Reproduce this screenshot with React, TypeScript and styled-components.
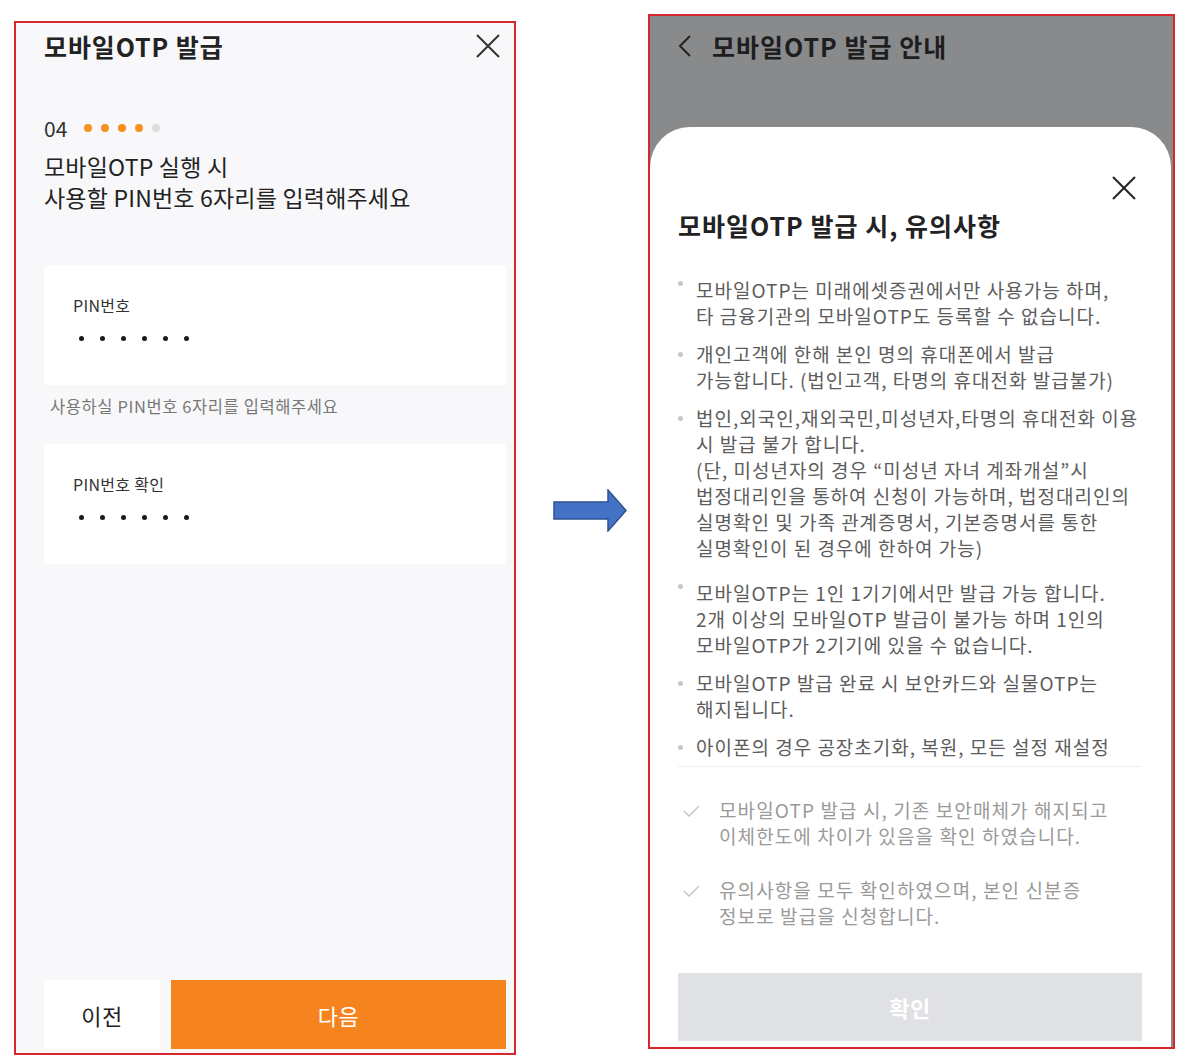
import React from "react";
import styled, { createGlobalStyle } from "styled-components";

const Global = createGlobalStyle`
  html, body { margin: 0; padding: 0; background: #ffffff; }
  body { font-family: "Noto Sans CJK KR", "Noto Sans", sans-serif; color: #222; }
  * { box-sizing: border-box; }
`;

const Page = styled.div`
  display: flex;
  align-items: flex-start;
  padding-left: 14px;
  width: 1195px;
  height: 1063px;
  overflow: hidden;
`;

/* ---------- Left panel ---------- */
const LeftPanel = styled.section`
  margin-top: 21px;
  width: 502px;
  height: 1034px;
  border: 2px solid #d7262d;
  background: #f8f8fa;
  display: flex;
  flex-direction: column;
  padding: 6px 8px 4px 28px;
`;

const HeaderRow = styled.div`
  display: flex;
  align-items: center;
  justify-content: space-between;
  height: 34px;
`;

const Title = styled.h1`
  margin: 0;
  font-size: 25px;
  line-height: 34px;
  font-weight: 700;
  color: #222;
  letter-spacing: 0.9px;
`;

const CloseBtn = styled.button<{ $mr?: number }>`
  border: 0;
  background: none;
  padding: 0;
  margin-right: ${(p) => p.$mr ?? 0}px;
  width: 24px;
  height: 24px;
  display: flex;
`;

const StepRow = styled.div`
  margin-top: 51px;
  display: flex;
  align-items: center;
  height: 28px;
`;

const StepNum = styled.span`
  font-size: 21px;
  line-height: 28px;
  color: #333;
  font-weight: 400;
  margin-right: 17px;
`;

const StepDot = styled.span<{ $on: boolean }>`
  width: 8px;
  height: 8px;
  border-radius: 50%;
  background: ${(p) => (p.$on ? "#f4901c" : "#dedede")};
  margin-right: 9px;
`;

const Heading = styled.p`
  margin: 9px 0 0;
  font-size: 23px;
  line-height: 31px;
  color: #222;
  letter-spacing: 0.2px;
`;

const Card = styled.div<{ $mt: number }>`
  margin-top: ${(p) => p.$mt}px;
  background: #ffffff;
  border-radius: 4px;
  height: 120px;
  padding: 29px 0 0 29px;
`;

const Label = styled.div`
  font-size: 16px;
  line-height: 22px;
  color: #333;
  letter-spacing: 0.3px;
`;

const Masked = styled.div`
  margin: 20px 0 0 6px;
  display: flex;
  gap: 16px;
`;

const MaskDot = styled.span`
  width: 5px;
  height: 5px;
  border-radius: 50%;
  background: #1a1a1a;
`;

const Helper = styled.div`
  margin: 10px 0 0 6px;
  font-size: 16.5px;
  line-height: 22px;
  color: #777;
  letter-spacing: 0.6px;
`;

const Spacer = styled.div`
  flex: 1;
`;

const ButtonRow = styled.div`
  display: flex;
  gap: 11px;
  height: 69px;
`;

const NavButton = styled.button<{ $primary?: boolean }>`
  border: 0;
  font-family: inherit;
  font-size: 22px;
  height: 69px;
  letter-spacing: 0.5px;
  ${(p) =>
    p.$primary
      ? `flex: 1; background: #f5841f; color: #ffffff;`
      : `width: 116px; background: #ffffff; color: #222;`}
`;

/* ---------- Arrow ---------- */
const ArrowWrap = styled.div`
  margin: 489px 0 0 37px;
  width: 74px;
  height: 43px;
  display: flex;
`;

/* ---------- Right panel ---------- */
const RightPanel = styled.section`
  margin: 14px 0 0 21px;
  width: 527px;
  height: 1035px;
  border: 2px solid #d7262d;
  background: #898a8c;
  padding-right: 2px;
  display: flex;
  flex-direction: column;
`;

const TopBar = styled.div`
  height: 60px;
  display: flex;
  align-items: center;
  padding-left: 28px;
  gap: 20px;
`;

const TopTitle = styled.span`
  font-size: 25px;
  font-weight: 700;
  line-height: 34px;
  color: #1e1e1e;
  letter-spacing: 1px;
`;

const Sheet = styled.div`
  margin-top: 51px;
  flex: 1;
  background: #ffffff;
  border-radius: 40px 40px 0 0;
  display: flex;
  flex-direction: column;
  padding: 0 29px 6px 28px;
`;

const SheetClose = styled.div`
  margin-top: 49px;
  display: flex;
  justify-content: flex-end;
`;

const SheetTitle = styled.h2`
  margin: 8px 0 0;
  font-size: 25px;
  line-height: 34px;
  font-weight: 700;
  color: #222;
  letter-spacing: 1px;
`;

const NoticeList = styled.ul`
  margin: 35px 0 0;
  padding: 0;
  list-style: none;
  display: flex;
  flex-direction: column;
  gap: 12px;
  height: 490px;
  overflow: hidden;
  border-bottom: 1px solid #eeeeee;
`;

const NoticeItem = styled.li<{ $extra?: number }>`
  position: relative;
  padding-left: 18px;
  margin-top: ${(p) => p.$extra ?? 0}px;
  font-size: 19px;
  line-height: 26px;
  color: #5c5c5c;
  letter-spacing: 1px;
  white-space: nowrap;
`;

const Bullet = styled.span<{ $high?: boolean }>`
  position: absolute;
  left: 0;
  top: ${(p) => (p.$high ? 4 : 11)}px;
  width: 5px;
  height: 5px;
  border-radius: 50%;
  background: #c8c8c8;
`;

const CheckList = styled.div`
  margin-top: 30px;
  display: flex;
  flex-direction: column;
  gap: 28px;
`;

const CheckRow = styled.div`
  display: flex;
  align-items: flex-start;
  gap: 19px;
  padding-left: 5px;
`;

const CheckIcon = styled.span`
  margin-top: 8px;
  display: flex;
`;

const CheckText = styled.div`
  font-size: 19px;
  line-height: 26px;
  color: #9a9a9a;
  letter-spacing: 1.1px;
  white-space: nowrap;
`;

const ConfirmButton = styled.button`
  border: 0;
  height: 68px;
  background: #dfe1e4;
  color: #ffffff;
  font-family: inherit;
  font-size: 22px;
  font-weight: 700;
  letter-spacing: 0.5px;
`;

const XIcon = ({ color = "#333" }: { color?: string }) => (
  <svg width="24" height="24" viewBox="0 0 24 24">
    <path d="M1 1 L23 23 M23 1 L1 23" stroke={color} strokeWidth="2" fill="none" />
  </svg>
);

const notices: { lines: string[]; high?: boolean; extra?: number }[] = [
  { lines: ["모바일OTP는 미래에셋증권에서만 사용가능 하며,", "타 금융기관의 모바일OTP도 등록할 수 없습니다."], high: true },
  { lines: ["개인고객에 한해 본인 명의 휴대폰에서 발급", "가능합니다. (법인고객, 타명의 휴대전화 발급불가)"] },
  {
    lines: [
      "법인,외국인,재외국민,미성년자,타명의 휴대전화 이용",
      "시 발급 불가 합니다.",
      "(단, 미성년자의 경우 “미성년 자녀 계좌개설”시",
      "법정대리인을 통하여 신청이 가능하며, 법정대리인의",
      "실명확인 및 가족 관계증명서, 기본증명서를 통한",
      "실명확인이 된 경우에 한하여 가능)",
    ],
  },
  {
    lines: ["모바일OTP는 1인 1기기에서만 발급 가능 합니다.", "2개 이상의 모바일OTP 발급이 불가능 하며 1인의", "모바일OTP가 2기기에 있을 수 없습니다."],
    high: true,
    extra: 7,
  },
  { lines: ["모바일OTP 발급 완료 시 보안카드와 실물OTP는", "해지됩니다."] },
  { lines: ["아이폰의 경우 공장초기화, 복원, 모든 설정 재설정"] },
];

const checks = [
  ["모바일OTP 발급 시, 기존 보안매체가 해지되고", "이체한도에 차이가 있음을 확인 하였습니다."],
  ["유의사항을 모두 확인하였으며, 본인 신분증", "정보로 발급을 신청합니다."],
];

const Lines = ({ lines }: { lines: string[] }) => (
  <>
    {lines.map((l, i) => (
      <React.Fragment key={i}>
        {i > 0 && <br />}
        {l}
      </React.Fragment>
    ))}
  </>
);

export default function App() {
  return (
    <>
      <Global />
      <Page>
        <LeftPanel>
          <HeaderRow>
            <Title>모바일OTP 발급</Title>
            <CloseBtn $mr={6} aria-label="닫기">
              <XIcon />
            </CloseBtn>
          </HeaderRow>
          <StepRow>
            <StepNum>04</StepNum>
            {[true, true, true, true, false].map((on, i) => (
              <StepDot key={i} $on={on} />
            ))}
          </StepRow>
          <Heading>
            모바일OTP 실행 시<br />
            사용할 PIN번호 6자리를 입력해주세요
          </Heading>
          <Card $mt={52}>
            <Label>PIN번호</Label>
            <Masked>
              {Array.from({ length: 6 }).map((_, i) => (
                <MaskDot key={i} />
              ))}
            </Masked>
          </Card>
          <Helper>사용하실 PIN번호 6자리를 입력해주세요</Helper>
          <Card $mt={27}>
            <Label>PIN번호 확인</Label>
            <Masked>
              {Array.from({ length: 6 }).map((_, i) => (
                <MaskDot key={i} />
              ))}
            </Masked>
          </Card>
          <Spacer />
          <ButtonRow>
            <NavButton>이전</NavButton>
            <NavButton $primary>다음</NavButton>
          </ButtonRow>
        </LeftPanel>

        <ArrowWrap>
          <svg width="74" height="43" viewBox="0 0 74 43">
            <polygon
              points="1,13 55,13 55,1 73,21.5 55,42 55,30 1,30"
              fill="#4472c4"
              stroke="#2f528f"
              strokeWidth="1.5"
            />
          </svg>
        </ArrowWrap>

        <RightPanel>
          <TopBar>
            <svg width="14" height="22" viewBox="0 0 14 22">
              <path d="M12 1 L2 11 L12 21" stroke="#222" strokeWidth="2" fill="none" />
            </svg>
            <TopTitle>모바일OTP 발급 안내</TopTitle>
          </TopBar>
          <Sheet>
            <SheetClose>
              <CloseBtn $mr={6} aria-label="닫기">
                <XIcon color="#222" />
              </CloseBtn>
            </SheetClose>
            <SheetTitle>모바일OTP 발급 시, 유의사항</SheetTitle>
            <NoticeList>
              {notices.map((n, i) => (
                <NoticeItem key={i} $extra={n.extra}>
                  <Bullet $high={n.high} />
                  <Lines lines={n.lines} />
                </NoticeItem>
              ))}
            </NoticeList>
            <CheckList>
              {checks.map((c, i) => (
                <CheckRow key={i}>
                  <CheckIcon>
                    <svg width="17" height="12" viewBox="0 0 17 12">
                      <path d="M1 6 L6 11 L16 1" stroke="#c6c6c6" strokeWidth="1.5" fill="none" />
                    </svg>
                  </CheckIcon>
                  <CheckText>
                    <Lines lines={c} />
                  </CheckText>
                </CheckRow>
              ))}
            </CheckList>
            <Spacer />
            <ConfirmButton>확인</ConfirmButton>
          </Sheet>
        </RightPanel>
      </Page>
    </>
  );
}
